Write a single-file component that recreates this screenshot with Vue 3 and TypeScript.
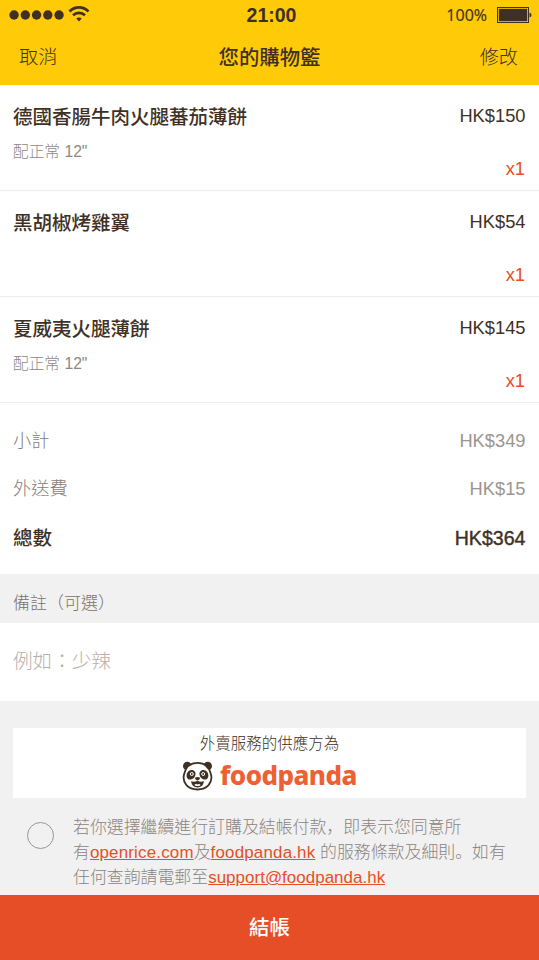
<script setup lang="ts">
interface CartItem {
  name: string
  option?: string
  price: string
  quantity: number
}

interface SummaryLine {
  label: string
  amount: string
  total?: boolean
}

const items: CartItem[] = [
  { name: '德國香腸牛肉火腿蕃茄薄餅', option: '配正常 12"', price: 'HK$150', quantity: 1 },
  { name: '黑胡椒烤雞翼', price: 'HK$54', quantity: 1 },
  { name: '夏威夷火腿薄餅', option: '配正常 12"', price: 'HK$145', quantity: 1 },
]

const summary: SummaryLine[] = [
  { label: '小計', amount: 'HK$349' },
  { label: '外送費', amount: 'HK$15' },
  { label: '總數', amount: 'HK$364', total: true },
]
</script>

<template>
  <div class="screen">
    <header class="header">
      <div class="status">
        <div class="signal">
          <svg class="dots" width="56" height="12" viewBox="0 0 56 12">
            <circle v-for="n in 5" :key="n" :cx="n * 11.25 - 6.2" cy="6" r="4.7" />
          </svg>
          <svg class="wifi" width="22" height="18" viewBox="0 0 22 18">
            <path class="arc" d="M1.5 6.4C7 1 15 1 20.5 6.4" />
            <path class="arc" d="M5 10.2C8.5 7 13.5 7 17 10.2" />
            <path d="M11 16.5L8.3 13.5C9.5 12 12.5 12 13.7 13.5Z" />
          </svg>
        </div>
        <div class="clock">21:00</div>
        <div class="power">
          <span class="percent">100%</span>
          <svg width="37" height="18" viewBox="0 0 37 18">
            <rect class="case" x="1.5" y="1.5" width="31" height="15" />
            <rect x="2.8" y="2.8" width="28.4" height="12.4" />
            <path d="M33.5 6.5q2 .5 2 2.500t-2 2.500z" />
          </svg>
        </div>
      </div>
      <nav class="nav">
        <span class="action">取消</span>
        <h1 class="title">您的購物籃</h1>
        <span class="action right">修改</span>
      </nav>
    </header>

    <section v-for="item in items" :key="item.name" class="item">
      <div class="details">
        <div class="name">{{ item.name }}</div>
        <div v-if="item.option" class="option">{{ item.option }}</div>
      </div>
      <div class="cost">
        <div class="price">{{ item.price }}</div>
        <div class="quantity">x{{ item.quantity }}</div>
      </div>
    </section>

    <section class="summary">
      <div v-for="line in summary" :key="line.label" class="line" :class="{ total: line.total }">
        <span class="label">{{ line.label }}</span>
        <span class="amount">{{ line.amount }}</span>
      </div>
    </section>

    <div class="remark-heading">備註<span class="mark">（</span>可選<span class="mark">）</span></div>
    <div class="remark">例如：少辣</div>

    <section class="footer">
      <div class="provider">
        <div class="provider-label">外賣服務的供應方為</div>
        <div class="brand">
          <svg class="panda" width="31" height="30" viewBox="0 0 31 30">
            <circle class="fur" cx="5.3" cy="5" r="4.3" />
            <circle class="fur" cx="25.7" cy="5" r="4.3" />
            <path class="face" d="M15.5 1.800C23 1.800 27.500 6.500 29 13.500C31 22 25 28.500 15.500 28.500S0 22 2 13.500C3.500 6.500 8 1.800 15.500 1.800Z" />
            <path class="fur" d="M7.500 9.500C10 8 14 9.500 13.500 13.500C13 17.500 8.500 19.800 6 18C3.500 16 4.500 11 7.500 9.500Z" />
            <path class="fur" d="M23.500 9.500C21 8 17 9.500 17.500 13.500C18 17.500 22.500 19.800 25 18C27.500 16 26.500 11 23.500 9.500Z" />
            <circle class="eye" cx="9.8" cy="13" r="1.5" />
            <circle class="eye" cx="21.2" cy="13" r="1.5" />
            <path class="fur" d="M12.800 16.700Q15.500 15.200 18.200 16.700Q17.500 19.300 15.500 19.500Q13.500 19.300 12.800 16.700Z" />
            <path class="fur" d="M9 20.300Q12.500 21.300 15.500 19.800Q18.500 21.300 22 20.300Q21 26.500 15.500 26.500T9 20.300Z" />
            <path class="tongue" d="M12.300 23.900Q13.900 22.500 15.500 23.600Q17.100 22.500 18.700 23.900Q15.500 26.300 12.300 23.900Z" />
          </svg>
          <span class="wordmark">foodpanda</span>
        </div>
      </div>
      <div class="consent">
        <span class="radio"></span>
        <div class="terms">
          <div>若你選擇繼續進行訂購及結帳付款<span class="mark">，</span>即表示您同意所</div>
          <div>有<a class="site">openrice.com</a>及<a class="site">foodpanda.hk</a> 的服務條款及細則<span class="mark">。</span>如有</div>
          <div>任何查詢請電郵至<a>support@foodpanda.hk</a></div>
        </div>
      </div>
    </section>

    <div class="checkout">結帳</div>
  </div>
</template>

<style>
body {
  margin: 0;
  overflow: hidden;
}
</style>

<style scoped>
.screen {
  display: flex;
  flex-direction: column;
  width: 539px;
  height: 960px;
  overflow: hidden;
  background: #fff;
  color: #403024;
  font-family: "Liberation Sans", "Noto Sans CJK TC", sans-serif;
}
.header {
  height: 85.3px;
  flex: none;
  background: #ffcb08;
}
.status {
  display: grid;
  grid-template-columns: 1fr auto 1fr;
  height: 30px;
  align-items: center;
}
.status svg,
.fur {
  fill: #403024;
}
.signal {
  display: flex;
  align-items: center;
  padding-left: 9px;
}
.wifi {
  margin: -2px 0 0 3px;
}
.wifi .arc {
  fill: none;
  stroke: #403024;
  stroke-width: 2.8;
}
.clock {
  font-size: 19.5px;
  font-weight: 700;
  padding-left: 4px;
}
.power {
  display: flex;
  justify-content: flex-end;
  align-items: center;
  gap: 9px;
  padding-right: 6px;
}
.percent {
  font-family: "Open Sans", sans-serif;
  font-size: 16px;
  line-height: 20px;
  -webkit-text-stroke: 0.2px #403024;
}
.power .case {
  fill: none;
  stroke: #403024;
  stroke-width: 1;
}
.nav {
  display: grid;
  grid-template-columns: 1fr auto 1fr;
  align-items: center;
  height: 51px;
  padding: 0 21px 0 19px;
}
.action {
  font-size: 19.2px;
  font-weight: 300;
}
.right {
  text-align: right;
}
.title {
  margin: 0;
  padding-left: 2px;
  font-size: 20.4px;
  font-weight: 500;
}
.item {
  display: flex;
  justify-content: space-between;
  box-sizing: border-box;
  height: 105.8px;
  flex: none;
  padding: 16px 13.5px 0 13px;
  border-bottom: 1px solid #ececec;
}
.name {
  height: 30px;
  margin-top: 1px;
  line-height: 30px;
  font-size: 19.5px;
  font-weight: 500;
}
.option {
  height: 24px;
  margin-top: 8px;
  line-height: 24px;
  font-size: 15.7px;
  font-weight: 300;
  color: #8f8883;
}
.cost {
  text-align: right;
  font-size: 18.3px;
}
.price {
  height: 30px;
  line-height: 30px;
}
.quantity {
  height: 30px;
  margin-top: 23px;
  padding-right: 0.5px;
  line-height: 30px;
  color: #e64e27;
}
.summary {
  box-sizing: border-box;
  height: 171.8px;
  flex: none;
  padding: 14px 13.5px 0 13px;
}
.line {
  display: flex;
  justify-content: space-between;
  height: 48.6px;
  line-height: 48px;
  font-size: 18.3px;
  color: #9b9590;
}
.label {
  font-size: 18.2px;
  font-weight: 300;
  color: #857d77;
}
.total {
  color: #403024;
}
.total .label {
  font-size: 19.5px;
  font-weight: 500;
  color: #403024;
}
.total .amount {
  font-size: 19.6px;
  -webkit-text-stroke: 0.4px #403024;
}
.remark-heading {
  height: 49px;
  flex: none;
  padding-left: 13px;
  line-height: 59px;
  font-size: 17px;
  font-weight: 300;
  color: #79716b;
  background: #f1f1f1;
}
.remark {
  height: 77.8px;
  flex: none;
  padding-left: 13px;
  line-height: 77px;
  font-size: 19.6px;
  font-weight: 300;
  color: #b8b0ab;
}
.footer {
  box-sizing: border-box;
  height: 194px;
  flex: none;
  padding: 27px 13px 0;
  background: #f1f1f1;
}
.provider {
  height: 70px;
  background: #fff;
}
.provider-label {
  height: 32px;
  line-height: 32px;
  text-align: center;
  font-size: 15.5px;
  font-weight: 300;
}
.brand {
  display: flex;
  gap: 7px;
  height: 31px;
  padding-left: 169px;
}
.panda {
  margin-top: 1px;
}
.face {
  fill: #fff;
  stroke: #403024;
  stroke-width: 1.8;
}
.eye {
  fill: #403024;
  stroke: #fff;
  stroke-width: 1;
}
.tongue {
  fill: #fff;
}
.wordmark {
  font-family: "Noto Sans", sans-serif;
  font-size: 26px;
  font-weight: 800;
  line-height: 31px;
  letter-spacing: -0.55px;
  color: #ee6034;
}
.consent {
  display: flex;
  gap: 19px;
  padding: 17px 0 0 14px;
}
.radio {
  box-sizing: border-box;
  width: 27px;
  height: 27px;
  margin-top: 7px;
  border: 1px solid #9b9590;
  border-radius: 50%;
}
.terms {
  font-size: 16.9px;
  font-weight: 300;
  color: #8b847f;
  white-space: nowrap;
}
.terms > div {
  height: 25px;
  line-height: 25px;
}
.terms a {
  color: #e64e27;
  text-decoration: underline;
  letter-spacing: 0.06px;
}
.terms .site {
  letter-spacing: 0.2px;
}
.mark {
  font-family: "Noto Sans CJK JP", sans-serif;
  line-height: 1;
}
.checkout {
  height: 65px;
  flex: none;
  line-height: 65px;
  text-align: center;
  font-size: 20.5px;
  font-weight: 500;
  color: #fff;
  background: #e64e27;
}
</style>
